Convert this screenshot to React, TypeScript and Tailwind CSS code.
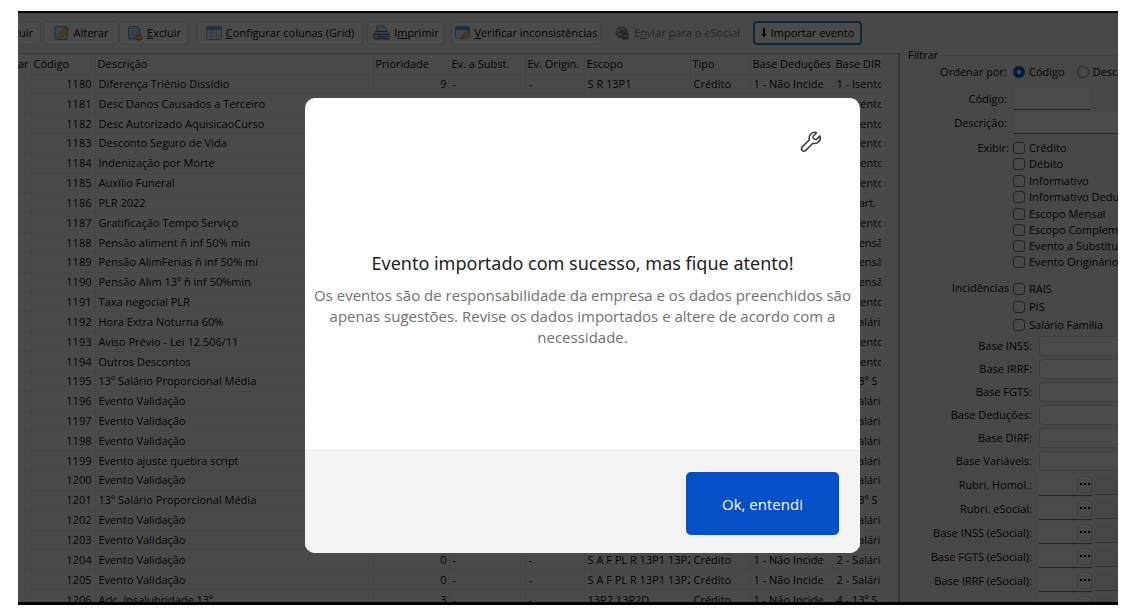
import React from 'react';

interface EventRow {
  code: number;
  name: string;
  priority: string;
  scope: string;
  deduction: string;
  dirf: string;
}

const row = (code: number, name: string, dirf: string, priority = '0', scope = 'S A F PL R 13P1 13P2'): EventRow => ({
  code,
  name,
  priority,
  scope,
  deduction: '1 - Não Incide',
  dirf,
});

const ROWS: EventRow[] = [
  row(1180, 'Diferença Triênio Dissídio', '1 - Isento', '9', 'S R 13P1'),
  row(1181, 'Desc Danos Causados a Terceiro', '1 - Isento'),
  row(1182, 'Desc Autorizado AquisicaoCurso', '1 - Isento'),
  row(1183, 'Desconto Seguro de Vida', '1 - Isento'),
  row(1184, 'Indenização por Morte', '1 - Isento'),
  row(1185, 'Auxílio Funeral', '1 - Isento'),
  row(1186, 'PLR 2022', '5 - Part.'),
  row(1187, 'Gratificação Tempo Serviço', '1 - Isento'),
  row(1188, 'Pensão aliment ñ inf 50% min', '6 - Pensão'),
  row(1189, 'Pensão AlimFerias ñ inf 50% mi', '6 - Pensão'),
  row(1190, 'Pensão Alim 13º ñ inf 50%min', '6 - Pensão'),
  row(1191, 'Taxa negocial PLR', '1 - Isento'),
  row(1192, 'Hora Extra Noturna 60%', '2 - Salário'),
  row(1193, 'Aviso Prévio - Lei 12.506/11', '1 - Isento'),
  row(1194, 'Outros Descontos', '1 - Isento'),
  row(1195, '13º Salário Proporcional Média', '4 - 13º S'),
  row(1196, 'Evento Validação', '2 - Salário'),
  row(1197, 'Evento Validação', '2 - Salário'),
  row(1198, 'Evento Validação', '2 - Salário'),
  row(1199, 'Evento ajuste quebra script', '2 - Salário'),
  row(1200, 'Evento Validação', '2 - Salário'),
  row(1201, '13º Salário Proporcional Média', '4 - 13º S'),
  row(1202, 'Evento Validação', '2 - Salário'),
  row(1203, 'Evento Validação', '2 - Salário'),
  row(1204, 'Evento Validação', '2 - Salário'),
  row(1205, 'Evento Validação', '2 - Salário'),
  row(1206, 'Adc. Insalubridade 13º', '4 - 13º S', '3', '13P2 13P2D'),
];

const COLUMNS = [
  { label: 'ar', width: 'w-[13px]' },
  { label: 'Código', width: 'w-16' },
  { label: 'Descrição', width: '' },
  { label: 'Prioridade', width: 'w-[76px]' },
  { label: 'Ev. a Subst.', width: 'w-[76px]' },
  { label: 'Ev. Origin.', width: 'w-[59px]' },
  { label: 'Escopo', width: 'w-[106px]' },
  { label: 'Tipo', width: 'w-[60px]' },
  { label: 'Base Deduções', width: 'w-[83px]' },
  { label: 'Base DIRF', width: 'w-12' },
];

const SHOW_GROUPS = [
  ['Crédito', 'Débito'],
  ['Informativo', 'Informativo Dedutível'],
  ['Escopo Mensal', 'Escopo Complementar', 'Evento a Substituir', 'Evento Originário'],
];

const BASES = ['Base INSS:', 'Base IRRF:', 'Base FGTS:', 'Base Deduções:', 'Base DIRF:', 'Base Variáveis:'];
const LOOKUPS = ['Rubri. Homol.:', 'Rubri. eSocial:', 'Base INSS (eSocial):', 'Base FGTS (eSocial):', 'Base IRRF (eSocial):', ''];

const EditIcon = () => (
  <svg width="16" height="16" viewBox="0 0 16 16" className="shrink-0">
    <rect x="1" y="1.5" width="12.5" height="13" rx="1.5" fill="#cfe2f5" stroke="#5a95cf" />
    <path d="M4 12.500l1-3.500 6.500-6.500 3 3L8 12z" fill="#f5cf5a" stroke="#b58a2a" strokeWidth=".8" />
    <path d="M4 12.500l1-3.500 2.500 2.500z" fill="#f2e2c4" />
  </svg>
);

const DeleteIcon = () => (
  <svg width="16" height="16" viewBox="0 0 16 16" className="shrink-0">
    <path d="M1.500 3a1.500 1.500 0 0 1 1.500-1.500h7.500l2.500 2.500v8.500a1.500 1.500 0 0 1-1.500 1.500H3a1.500 1.500 0 0 1-1.500-1.500z" fill="#b9d6f2" stroke="#5a95cf" />
    <circle cx="12" cy="12.500" r="3.300" fill="#e8762c" />
    <path d="M10 12.500h4" stroke="#fff" strokeWidth="1.200" />
  </svg>
);

const GridIcon = () => (
  <svg width="16" height="14" viewBox="0 0 16 14" className="shrink-0">
    <rect x=".5" y=".5" width="15" height="13" rx="1" fill="#eef4fa" stroke="#7fa6cc" />
    <path d="M1 1h14v3H1z" fill="#6fa3d8" />
    <path d="M1 7h14M1 10h14M5.500 4v9M10.500 4v9" stroke="#a9bccd" strokeWidth=".8" />
  </svg>
);

const PrintIcon = () => (
  <svg width="17" height="16" viewBox="0 0 17 16" className="shrink-0">
    <path d="M4 7V1h7l2 2v4" fill="#cfe3f7" stroke="#5b8fc4" />
    <path d="M2.500 6.500h12l1.500 2.500v5h-15V9z" fill="#c3ccd6" stroke="#5d6b7a" />
    <path d="M1.500 9.500h14" stroke="#5d6b7a" />
    <path d="M4 12h9" stroke="#4583c4" strokeWidth="1.500" />
  </svg>
);

const CheckIcon = () => (
  <svg width="16" height="16" viewBox="0 0 16 16" className="shrink-0">
    <rect x=".5" y="1.500" width="14" height="12" rx="1" fill="#e6eef7" stroke="#7fa6cc" />
    <path d="M1 2h13v3H1z" fill="#5b9be0" />
    <path d="M6 14l.8-3 6.200-6 2.500 2.500-6.500 6z" fill="#f5b93c" stroke="#b5822a" strokeWidth=".7" />
  </svg>
);

const SendIcon = () => (
  <svg width="16" height="16" viewBox="0 0 16 16" className="shrink-0">
    <circle cx="7.500" cy="7.500" r="6" fill="#8a8a8a" />
    <path d="M3.500 7.500a4 4 0 0 1 7-2.500M4 9.500h5" stroke="#ddd" strokeWidth="1.300" fill="none" />
    <path d="M8 8h6.500v6.500H8z" fill="#6f6f6f" />
    <path d="M9.500 11h3.500M11.500 9.500l1.700 1.500-1.700 1.500" stroke="#ddd" fill="none" />
  </svg>
);

const WrenchIcon = () => (
  <svg width="24" height="24" viewBox="0 0 24 24" fill="none" stroke="#3a3a3a" strokeWidth="1.5" strokeLinejoin="round" strokeLinecap="round">
    <path d="M17.600 2.700a5.600 5.600 0 0 0-7.200 7L3 17.100a2.500 2.500 0 0 0 3.500 3.500l7.400-7.400a5.600 5.600 0 0 0 7-7.300l-3.200 3.200a1.500 1.500 0 0 1-2.200 0l-1-1a1.500 1.500 0 0 1 0-2.200z" />
  </svg>
);

const toolButton = 'flex h-6 shrink-0 items-center justify-center gap-1 rounded-[4px] border border-[#dadada] bg-[#fbfbfb] whitespace-nowrap';

const Toolbar = () => (
  <div className="flex h-10 items-center">
    <button className="flex h-6 w-[23px] shrink-0 items-center justify-end overflow-hidden rounded-r-[4px] border border-l-0 border-[#dadada] bg-[#fbfbfb] pr-[7px]">luir</button>
    <button className={`${toolButton} ml-0.5 w-[76px]`}><EditIcon />Alterar</button>
    <button className={`${toolButton} w-[70px]`}><DeleteIcon /><span><u>E</u>xcluir</span></button>
    <button className={`${toolButton} ml-2 w-[166px]`}><GridIcon /><span><u>C</u>onfigurar colunas (Grid)</span></button>
    <button className={`${toolButton} ml-1 w-[78px]`}><PrintIcon /><span>I<u>m</u>primir</span></button>
    <button className={`${toolButton} ml-1.5 w-[150px]`}><CheckIcon /><span><u>V</u>erificar inconsistências</span></button>
    <button disabled className="ml-1.5 flex h-6 w-[140px] shrink-0 items-center justify-center gap-1 whitespace-nowrap text-[#777]"><SendIcon /><span>E<u>n</u>viar para o eSocial</span></button>
    <button className="ml-1.5 flex h-6 w-[109px] shrink-0 items-center justify-center gap-1 rounded-[4px] border-2 border-[#2b7fc4] bg-[#fbfbfb] whitespace-nowrap">
      <svg width="6" height="10" viewBox="0 0 6 10"><path d="M2 0h2v6h1.500L3 9.500.5 6H2z" fill="#111" /></svg>
      Importar evento
    </button>
  </div>
);

const EventTable = () => (
  <div className="min-w-0 flex-1 overflow-hidden border-t border-r-2 border-[#b4b4b4] pr-[17px]">
    <table className="h-[556px] w-full table-fixed border-collapse bg-[#f9f9f9]">
      <thead>
        <tr className="h-5">
          {COLUMNS.map(col => (
            <th key={col.label} className={`${col.width} overflow-hidden border-r border-b border-[#e6e6e6] p-0 pl-0.5 text-left font-normal whitespace-nowrap first:pl-0 last:border-r-0`}>
              {col.label}
            </th>
          ))}
        </tr>
      </thead>
      <tbody>
        {ROWS.map(item => (
          <tr key={item.code} className="[&>td]:overflow-hidden [&>td]:border-r [&>td]:border-b [&>td]:border-[#ececec] [&>td]:py-0 [&>td]:pr-0 [&>td]:pl-[3px] [&>td]:whitespace-nowrap [&>td:last-child]:border-r-0">
            <td />
            <td><div className="pr-[3px] text-right">{item.code}</div></td>
            <td>{item.name}</td>
            <td><div className="pr-0.5 text-right">{item.priority}</div></td>
            <td>-</td>
            <td>-</td>
            <td>{item.scope}</td>
            <td>Crédito</td>
            <td>{item.deduction}</td>
            <td>{item.dirf}</td>
          </tr>
        ))}
      </tbody>
    </table>
  </div>
);

const checkBox = 'size-3 shrink-0 appearance-none rounded-[3px] border border-[#777] bg-[#f4f4f4]';

const CheckRow = ({ label, height }: { label: string; height: string }) => (
  <label className={`flex items-center gap-1 whitespace-nowrap ${height}`}>
    <input type="checkbox" className={checkBox} />
    {label}
  </label>
);

const FilterPanel = () => (
  <fieldset className="-mt-1 w-[218px] min-w-0 shrink-0 overflow-hidden border-t border-[#dcdcdc] pl-2">
    <legend className="pr-1 leading-3">Filtrar</legend>
    <div className="flex h-[22px] items-center whitespace-nowrap">
      <span className="w-[99px] shrink-0 text-right">Ordenar por:</span>
      <label className="ml-1.5 flex shrink-0 items-center gap-1">
        <input type="radio" name="order" defaultChecked className="size-3 appearance-none rounded-full border-4 border-[#0067c0] bg-white" />
        Código
      </label>
      <label className="ml-3 flex shrink-0 items-center gap-1">
        <input type="radio" name="order" className="size-3 appearance-none rounded-full border border-[#777] bg-[#f4f4f4]" />
        Descrição
      </label>
    </div>
    <div className="mt-1 flex h-6 items-center">
      <label htmlFor="code" className="w-[99px] shrink-0 text-right">Código:</label>
      <input id="code" className="ml-1.5 h-[22px] w-[78px] border-b border-[#777] bg-[#fcfcfc]" />
    </div>
    <div className="flex h-[23px] items-center">
      <label htmlFor="description" className="w-[99px] shrink-0 text-right">Descrição:</label>
      <input id="description" className="ml-1.5 h-[22px] min-w-0 flex-1 border-b border-[#777] bg-[#fcfcfc]" />
    </div>
    <div className="mt-1.5 flex">
      <span className="h-4 w-[101px] shrink-0 text-right">Exibir:</span>
      <div className="ml-1 flex flex-col gap-px">
        {SHOW_GROUPS.map(group => (
          <div key={group[0]}>
            {group.map(label => <CheckRow key={label} label={label} height="h-4" />)}
          </div>
        ))}
      </div>
    </div>
    <div className="mt-2.5 flex">
      <span className="h-[18px] w-[101px] shrink-0 text-right">Incidências</span>
      <div className="ml-1">
        {['RAIS', 'PIS', 'Salário Familia'].map(label => <CheckRow key={label} label={label} height="h-[18px]" />)}
      </div>
    </div>
    {BASES.map(label => (
      <div key={label} className="flex h-[23px] items-center">
        <label htmlFor={label} className="w-[124px] shrink-0 text-right whitespace-nowrap">{label}</label>
        <select id={label} className="ml-[7px] h-5 min-w-0 flex-1 appearance-none rounded-l-[4px] border border-r-0 border-[#d2d2d2] bg-[#fcfcfc]" />
      </div>
    ))}
    {LOOKUPS.map(label => (
      <div key={label} className="mt-px flex h-[23px] items-center">
        <label htmlFor={label || 'lookup'} className="w-[124px] shrink-0 text-right whitespace-nowrap">{label}</label>
        <div className="ml-[7px] flex h-[22px] w-[53px] shrink-0 items-center border-b border-[#777] bg-[#fcfcfc]">
          <input id={label || 'lookup'} className="min-w-0 flex-1" />
          <button aria-label="Pesquisar" className="flex h-[17px] w-[15px] shrink-0 items-center justify-center gap-0.5 rounded-[3px] border border-[#d2d2d2]">
            <span className="size-0.5 bg-black" />
            <span className="size-0.5 bg-black" />
            <span className="size-0.5 bg-black" />
          </button>
        </div>
        <input aria-label={label || 'lookup'} readOnly className="ml-1 h-5 min-w-0 flex-1 border-b border-[#a0a0a0] bg-[#ececec]" />
      </div>
    ))}
  </fieldset>
);

const SuccessDialog = () => (
  <div className="absolute inset-0 flex items-start justify-center bg-black/70 pt-[85px] pl-[29px]">
    <div role="dialog" aria-labelledby="dialog-title" className="flex w-[555px] flex-col overflow-hidden rounded-[10px] bg-white">
      <div className="flex justify-end pt-8 pr-[37px]">
        <WrenchIcon />
      </div>
      <div className="px-1 pt-[97px] pb-[102px] text-center">
        <h2 id="dialog-title" className="font-['Noto_Sans','Open_Sans',sans-serif] text-[18px] leading-6 text-[#222]">Evento importado com sucesso, mas fique atento!</h2>
        <p className="mt-2.5 text-[15px] leading-[21px] text-[#707070]">
          Os eventos são de responsabilidade da empresa e os dados preenchidos são apenas sugestões. Revise os dados importados e altere de acordo com a necessidade.
        </p>
      </div>
      <div className="flex justify-end border-t border-[#e6e6e6] bg-[#f4f4f4] px-[21px] pt-[21px] pb-[18px]">
        <button className="h-[63px] w-[153px] rounded-[5px] bg-[#0550c4] text-[15px] text-white">Ok, entendi</button>
      </div>
    </div>
  </div>
);

export default function App() {
  return (
    <div className="h-screen overflow-hidden bg-white pt-[11px] pr-[15px] pb-1 pl-[18px] font-['Open_Sans','Noto_Sans',sans-serif] text-[11px] leading-4 text-black">
      <div className="relative flex h-full flex-col overflow-hidden border-t-2 border-b-[3px] border-black bg-[#f0f0f0]">
        <Toolbar />
        <div className="flex min-h-0 flex-1">
          <EventTable />
          <FilterPanel />
        </div>
        <SuccessDialog />
      </div>
    </div>
  );
}
